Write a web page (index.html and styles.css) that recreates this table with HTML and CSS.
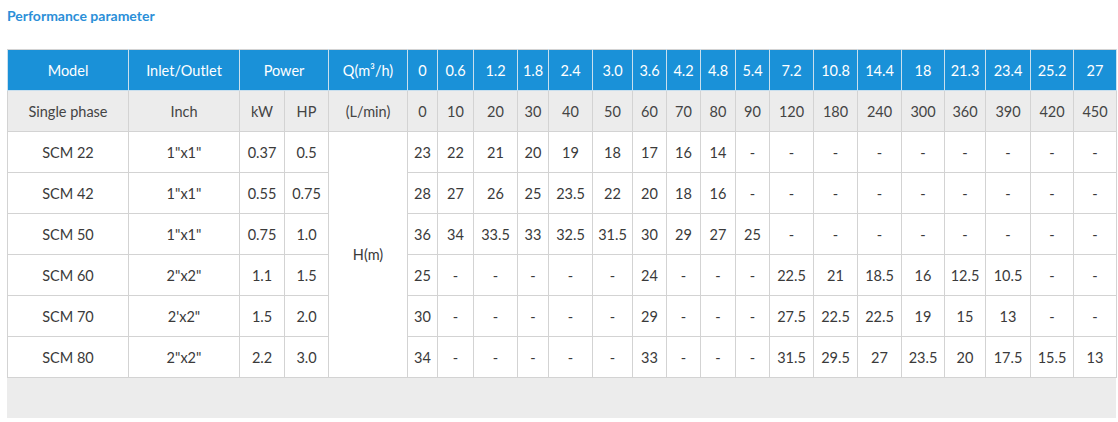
FILE: index.html
```html
<!DOCTYPE html>
<html lang="en">
<head>
<meta charset="utf-8">
<title>Performance parameter</title>
<link rel="stylesheet" href="styles.css">
</head>
<body>
<div class="page">
  <h2 class="title">Performance parameter</h2>
  <div class="table-wrap">
    <table class="perf">
      <colgroup>
        <col style="width:121px"><col style="width:111px"><col style="width:45px"><col style="width:44px"><col style="width:79px">
        <col style="width:30px"><col style="width:36px"><col style="width:44px"><col style="width:31px"><col style="width:44px">
        <col style="width:40px"><col style="width:34px"><col style="width:34px"><col style="width:35px"><col style="width:34px">
        <col style="width:44px"><col style="width:44px"><col style="width:44px"><col style="width:43px"><col style="width:41px">
        <col style="width:45px"><col style="width:43px"><col style="width:43px">
      </colgroup>
      <thead>
        <tr class="head">
          <th>Model</th><th>Inlet/Outlet</th><th colspan="2">Power</th><th>Q(m³/h)</th>
          <th>0</th><th>0.6</th><th>1.2</th><th>1.8</th><th>2.4</th><th>3.0</th><th>3.6</th><th>4.2</th><th>4.8</th><th>5.4</th><th>7.2</th><th>10.8</th><th>14.4</th><th>18</th><th>21.3</th><th>23.4</th><th>25.2</th><th>27</th>
        </tr>
        <tr class="sub">
          <td>Single phase</td><td>Inch</td><td>kW</td><td>HP</td><td>(L/min)</td>
          <td>0</td><td>10</td><td>20</td><td>30</td><td>40</td><td>50</td><td>60</td><td>70</td><td>80</td><td>90</td><td>120</td><td>180</td><td>240</td><td>300</td><td>360</td><td>390</td><td>420</td><td>450</td>
        </tr>
      </thead>
      <tbody>
        <tr>
          <td>SCM 22</td><td>1"x1"</td><td>0.37</td><td>0.5</td><td rowspan="6">H(m)</td>
          <td>23</td><td>22</td><td>21</td><td>20</td><td>19</td><td>18</td><td>17</td><td>16</td><td>14</td><td>-</td><td>-</td><td>-</td><td>-</td><td>-</td><td>-</td><td>-</td><td>-</td><td>-</td>
        </tr>
        <tr>
          <td>SCM 42</td><td>1"x1"</td><td>0.55</td><td>0.75</td>
          <td>28</td><td>27</td><td>26</td><td>25</td><td>23.5</td><td>22</td><td>20</td><td>18</td><td>16</td><td>-</td><td>-</td><td>-</td><td>-</td><td>-</td><td>-</td><td>-</td><td>-</td><td>-</td>
        </tr>
        <tr>
          <td>SCM 50</td><td>1"x1"</td><td>0.75</td><td>1.0</td>
          <td>36</td><td>34</td><td>33.5</td><td>33</td><td>32.5</td><td>31.5</td><td>30</td><td>29</td><td>27</td><td>25</td><td>-</td><td>-</td><td>-</td><td>-</td><td>-</td><td>-</td><td>-</td><td>-</td>
        </tr>
        <tr>
          <td>SCM 60</td><td>2"x2"</td><td>1.1</td><td>1.5</td>
          <td>25</td><td>-</td><td>-</td><td>-</td><td>-</td><td>-</td><td>24</td><td>-</td><td>-</td><td>-</td><td>22.5</td><td>21</td><td>18.5</td><td>16</td><td>12.5</td><td>10.5</td><td>-</td><td>-</td>
        </tr>
        <tr>
          <td>SCM 70</td><td>2'x2"</td><td>1.5</td><td>2.0</td>
          <td>30</td><td>-</td><td>-</td><td>-</td><td>-</td><td>-</td><td>29</td><td>-</td><td>-</td><td>-</td><td>27.5</td><td>22.5</td><td>22.5</td><td>19</td><td>15</td><td>13</td><td>-</td><td>-</td>
        </tr>
        <tr>
          <td>SCM 80</td><td>2"x2"</td><td>2.2</td><td>3.0</td>
          <td>34</td><td>-</td><td>-</td><td>-</td><td>-</td><td>-</td><td>33</td><td>-</td><td>-</td><td>-</td><td>31.5</td><td>29.5</td><td>27</td><td>23.5</td><td>20</td><td>17.5</td><td>15.5</td><td>13</td>
        </tr>
      </tbody>
    </table>
    <div class="table-foot"></div>
  </div>
</div>
</body>
</html>
```

FILE: styles.css
```css
html, body {
  margin: 0;
  padding: 0;
  background: #fff;
}

.page {
  padding: 7px 2px 0 7px;
  font-family: Lato, "Open Sans", sans-serif;
  color: #333;
}

.title {
  margin: 0;
  font-size: 14px;
  line-height: 17px;
  font-weight: 700;
  color: #2b8fd8;
  height: 42px;
}

.table-wrap {
  width: 1109px;
}

.perf {
  border-collapse: collapse;
  table-layout: fixed;
  width: 1109px;
  font-size: 14.5px;
}

.perf th,
.perf td {
  height: 40px;
  padding: 0;
  text-align: center;
  vertical-align: middle;
  border: 1px solid #d3d3d3;
  white-space: nowrap;
  font-weight: 400;
}

.perf .head th {
  background: #1a91d8;
  color: #fff;
  border-color: #c9dfee;
  border-top-color: #d3d3d3;
}

.perf .sub td {
  background: #ececec;
  color: #444;
}

.perf tbody td {
  background: #fff;
  color: #3a3a3a;
}

.table-foot {
  height: 40px;
  background: #ececec;
}
```
